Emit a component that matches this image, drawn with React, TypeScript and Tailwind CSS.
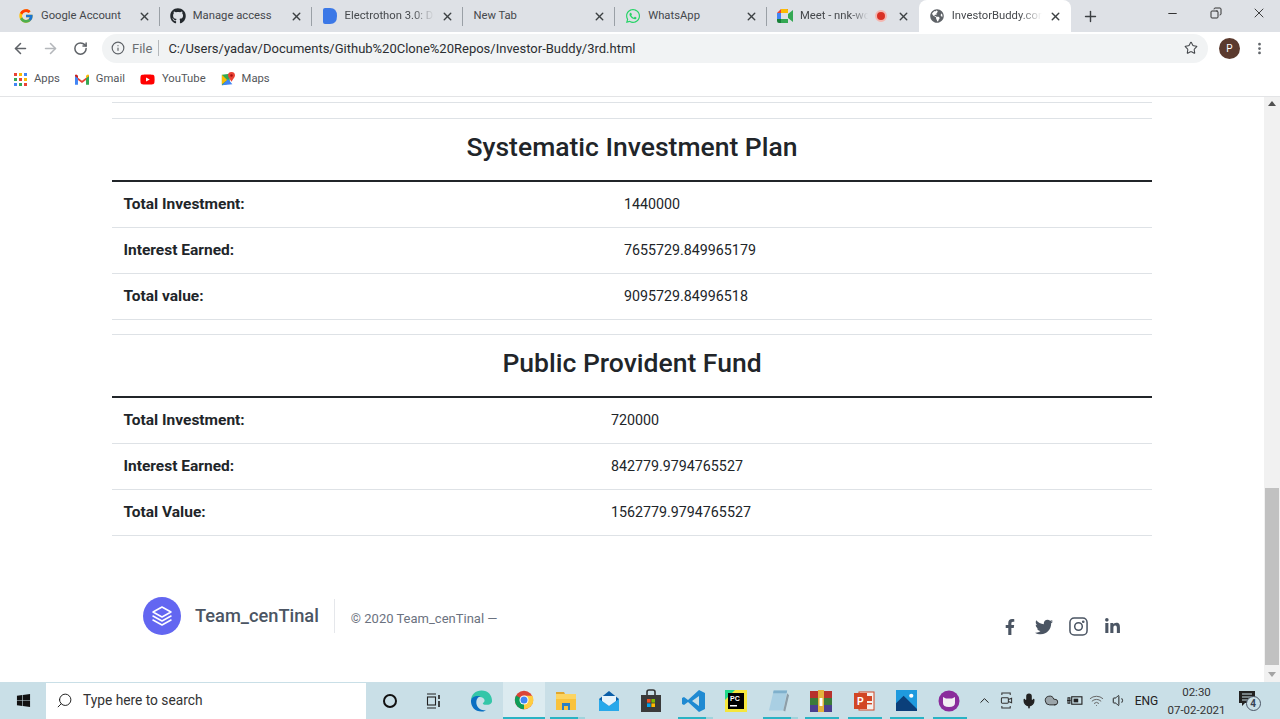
import { ArrowLeft, ArrowRight, ChevronUp, Info, Mic, Minus, MoreVertical, Plus, RotateCw, Search, Star, Volume1, Wifi, X, Cloud, Copy } from 'lucide-react';
import { FaFacebookF, FaGithub, FaGlobeAmericas, FaLinkedinIn, FaTwitter, FaWhatsapp, FaWindows, FaYoutube } from 'react-icons/fa';
import { FcGoogle } from 'react-icons/fc';
import type { ReactNode } from 'react';

const sans = 'font-["Roboto","Noto_Sans",sans-serif]';

function MeetIcon() {
  return (
    <svg viewBox="0 0 16 14" className="w-4 h-[14px]">
      <path d="M0 4 L4 0 H11 V4 H4 V10 H0 Z" fill="#ea4335" />
      <path d="M0 4 H4 V10 H0 Z" fill="#4285f4" />
      <path d="M0 10 H4 V14 H2 Q0 14 0 12 Z" fill="#188038" />
      <path d="M4 10 H11 V14 H4 Z" fill="#34a853" />
      <path d="M4 0 H10 Q11 0 11 1 V4 H4 Z" fill="#fbbc04" />
      <path d="M11 5 L16 1 V13 L11 9 Z" fill="#34a853" />
    </svg>
  );
}

function DocsTabIcon() {
  return (
    <svg viewBox="0 0 14 16" className="w-[14px] h-4">
      <path d="M0 2 Q0 0 2 0 H7 Q14 0 14 8 Q14 16 7 16 H2 Q0 16 0 14 Z" fill="#3b78e7" />
    </svg>
  );
}

function GmailIcon() {
  return (
    <svg viewBox="0 0 16 12" className="w-[14px] h-[11px]">
      <path d="M0 1.5 L8 7.5 L16 1.5 V4 L8 10 L0 4 Z" fill="#ea4335" />
      <path d="M0 2 V12 H3.4 V4.5 Z" fill="#4285f4" />
      <path d="M16 2 V12 H12.6 V4.5 Z" fill="#34a853" />
      <path d="M12.6 4.5 L16 2 V0.8 Q15 0 14 0.6 L12.6 1.7 Z" fill="#fbbc04" />
      <path d="M0 2 V0.8 Q1 0 2 0.6 L3.4 1.7 V4.5 Z" fill="#c5221f" />
    </svg>
  );
}

function MapsIcon() {
  return (
    <svg viewBox="0 0 16 16" className="w-[14px] h-[14px]">
      <path d="M1 3 L10 2 V13 L1 15 Z" fill="#34a853" />
      <path d="M1 15 L8 8 L13 14 Z" fill="#4285f4" />
      <path d="M1 3 L7 9 L1 14 Z" fill="#fbbc04" />
      <path d="M12 0 C9 0 8 2 8 4 C8 6 11 9 12 11 C13 9 16 6 16 4 C16 2 15 0 12 0 Z" fill="#ea4335" />
      <circle cx="12" cy="4" r="1.4" fill="#a50e0e" />
    </svg>
  );
}

function AppsIcon() {
  const colors = ['#ea4335', '#fbbc04', '#4285f4', '#34a853', '#ea4335', '#fbbc04', '#4285f4', '#34a853', '#ea4335'];
  return (
    <div className="grid grid-cols-3 gap-[2px]">
      {colors.map((c, i) => (
        <svg key={i} viewBox="0 0 3 3" className="w-[3px] h-[3px]">
          <rect width="3" height="3" fill={c} />
        </svg>
      ))}
    </div>
  );
}

function InstagramIcon() {
  return (
    <svg viewBox="0 0 20 20" className="w-[19px] h-[19px]" fill="none" stroke="#4b5563" strokeWidth="1.6">
      <rect x="1" y="1" width="18" height="18" rx="4.5" />
      <circle cx="10" cy="10" r="4" />
      <circle cx="15" cy="5" r="0.6" fill="#4b5563" />
    </svg>
  );
}

function ChromeIcon() {
  return (
    <svg viewBox="0 0 24 24" className="w-5 h-[22px]">
      <circle cx="12" cy="12" r="11" fill="#db4437" />
      <path d="M12 12 L2.5 6.5 A11 11 0 0 0 12 23 Z" fill="#0f9d58" />
      <path d="M12 7 H22 A11 11 0 0 1 12 23 Z" fill="#ffcd40" />
      <circle cx="12" cy="12" r="5.4" fill="#fff" />
      <circle cx="12" cy="12" r="4.2" fill="#4285f4" />
    </svg>
  );
}

function EdgeIcon() {
  return (
    <svg viewBox="0 0 24 24" className="w-[23px] h-[24px]">
      <path d="M1 12 C1 5 6 1 12 1 C19 1 23 6 23 12 C23 15 20 16 17 16 C14 16 13 15 13.5 14 C16 13 16 9 12 8 C6 7 1 9 1 12 Z" fill="#34c6a8" />
      <path d="M1 12 C1 8 6 6 11 7 C7 8 6 12 7 16 C8 20 13 23 17 21 C15 23 13 23 12 23 C5 23 1 18 1 12 Z" fill="#0a6fc2" />
    </svg>
  );
}

function FolderIcon() {
  return (
    <svg viewBox="0 0 22 20" className="w-[22px] h-5">
      <path d="M1 1 H9 L10 3 H1 Z" fill="#e2a72e" />
      <path d="M1 3 H21 V19 H1 Z" fill="#fcd462" />
      <path d="M1 8 H21 V19 H1 Z" fill="#f9c23c" />
      <path d="M7 12 H15 V19 H13 V15 H9 V19 H7 Z" fill="#2a7fc4" />
    </svg>
  );
}

function MailIcon() {
  return (
    <svg viewBox="0 0 22 22" className="w-[22px] h-[22px]">
      <path d="M1 9 L11 1 L21 9 V21 H1 Z" fill="#0a5ea8" />
      <path d="M1 9 L11 16 L21 9 V21 H1 Z" fill="#28a8ea" />
      <path d="M4 6 H18 V11 L11 16 L4 11 Z" fill="#e8f4fb" />
    </svg>
  );
}

function StoreIcon() {
  return (
    <svg viewBox="0 0 22 24" className="w-[22px] h-6">
      <path d="M7 6 V3 Q7 1 9 1 H13 Q15 1 15 3 V6" fill="none" stroke="#333" strokeWidth="1.6" />
      <rect x="1" y="6" width="20" height="17" fill="#3a3a3a" />
      <rect x="7" y="10" width="3.6" height="3.6" fill="#f25022" />
      <rect x="11.4" y="10" width="3.6" height="3.6" fill="#7fba00" />
      <rect x="7" y="14.4" width="3.6" height="3.6" fill="#00a4ef" />
      <rect x="11.4" y="14.4" width="3.6" height="3.6" fill="#ffb900" />
    </svg>
  );
}

function VsCodeIcon() {
  return (
    <svg viewBox="0 0 24 24" className="w-6 h-6">
      <path d="M17 1 L23 4 V20 L17 23 L6 13 L2 16 L0 15 V9 L2 8 L6 11 Z M17 7 L10 12 L17 17 Z" fill="#1f8ad2" />
    </svg>
  );
}

function PyCharmIcon() {
  return (
    <svg viewBox="0 0 22 22" className="w-[22px] h-[22px]">
      <rect width="22" height="22" fill="#f5e63c" />
      <path d="M0 0 H10 L0 10 Z" fill="#21d789" />
      <rect x="3" y="3" width="16" height="16" fill="#000" />
      <rect x="5" y="15" width="7" height="1.5" fill="#fff" />
      <text x="5" y="11" fontSize="7" fontWeight="700" fill="#fff" fontFamily="Liberation Sans, sans-serif">PC</text>
    </svg>
  );
}

function NotepadIcon() {
  return (
    <svg viewBox="0 0 24 24" className="w-[23px] h-6">
      <path d="M7 1 H21 L17 22 H2 Z" fill="#a9cfe3" />
      <path d="M7 1 H21 L20.5 4 H6.3 Z" fill="#7fb0cc" />
      <path d="M17 22 L21 4 L23 6 L19 23 Z" fill="#8d9ea8" />
    </svg>
  );
}

function WinRarIcon() {
  return (
    <svg viewBox="0 0 24 24" className="w-6 h-6">
      <rect x="1" y="2" width="22" height="7" fill="#b7312c" />
      <rect x="1" y="9" width="22" height="7" fill="#3b7a3a" />
      <rect x="1" y="16" width="22" height="7" fill="#4a3f8f" />
      <rect x="9" y="1" width="6" height="22" fill="#e3b23c" />
      <rect x="10.5" y="9" width="3" height="8" fill="#fff" />
    </svg>
  );
}

function PowerPointIcon() {
  return (
    <svg viewBox="0 0 22 22" className="w-[22px] h-[22px]">
      <rect x="6" y="2" width="15" height="18" fill="#f4f1ee" stroke="#d24625" />
      <rect x="14" y="6" width="5" height="5" fill="#d24625" />
      <rect x="14" y="13" width="5" height="1.4" fill="#d24625" />
      <rect x="1" y="3" width="13" height="16" fill="#d24625" />
      <text x="4" y="15" fontSize="10" fontWeight="700" fill="#fff" fontFamily="Liberation Sans, sans-serif">P</text>
    </svg>
  );
}

function PhotosIcon() {
  return (
    <svg viewBox="0 0 22 22" className="w-[21px] h-[21px]">
      <rect width="22" height="22" fill="#1f9ade" />
      <circle cx="16" cy="6" r="2.2" fill="#fff" />
      <path d="M0 22 V14 L8 6 L22 20 V22 Z" fill="#0b3f7a" />
    </svg>
  );
}

function CatAppIcon() {
  return (
    <svg viewBox="0 0 22 22" className="w-[22px] h-[22px]">
      <circle cx="11" cy="11" r="10.5" fill="#8a2c9c" />
      <path d="M5 7 L8 8.5 H14 L17 7 V13 Q17 17 11 17 Q5 17 5 13 Z" fill="#f2eef3" />
    </svg>
  );
}

function MeetNowIcon() {
  return (
    <svg viewBox="0 0 14 18" className="w-[13px] h-[17px]" fill="none" stroke="#333" strokeWidth="1.1">
      <path d="M2 3 V1 H11 V3 M2 15 V17 H11 V15" />
      <rect x="1.5" y="6" width="7.5" height="6" rx="1" />
      <path d="M9 8 L12.5 6.5 V11.5 L9 10" />
    </svg>
  );
}

function PowerIcon() {
  return (
    <svg viewBox="0 0 18 14" className="w-[17px] h-[13px]" fill="none" stroke="#222" strokeWidth="1.2">
      <rect x="6" y="3" width="11" height="8" />
      <rect x="8" y="5" width="5" height="4" fill="#222" stroke="none" />
      <path d="M1 7 H5 M2 4 V10 H4 V4 Z" />
    </svg>
  );
}

function NotificationIcon() {
  return (
    <div className="relative w-[22px] h-[20px]">
      <svg viewBox="0 0 16 16" className="w-4 h-4">
        <path d="M0 0 H16 V12 H6 L3 15 V12 H0 Z" fill="#222" />
        <path d="M3 3 H13 M3 6 H13 M3 9 H10" stroke="#c9dfe7" strokeWidth="1" />
      </svg>
      <span className="absolute top-[5px] left-[7px] w-[15px] h-[15px] rounded-full border border-gray-600 bg-[#c9dfe7] text-[10px] font-bold leading-[13px] text-center text-gray-700">4</span>
    </div>
  );
}

type TabInfo = { icon: ReactNode; title: string; record?: boolean; active?: boolean; fade?: boolean };

const tabs: TabInfo[] = [
  { icon: <FcGoogle size={16} />, title: 'Google Account' },
  { icon: <FaGithub size={16} color="#24292e" />, title: 'Manage access' },
  { icon: <DocsTabIcon />, title: 'Electrothon 3.0: Da', fade: true },
  { icon: null, title: 'New Tab' },
  { icon: <FaWhatsapp size={16} color="#25d366" />, title: 'WhatsApp' },
  { icon: <MeetIcon />, title: 'Meet - nnk-wc', record: true, fade: true },
  { icon: <FaGlobeAmericas size={14} color="#5f6368" />, title: 'InvestorBuddy.com', active: true, fade: true },
];

function Tab({ tab, last }: { tab: TabInfo; last: boolean }) {
  return (
    <div className={`relative flex items-center w-[151.8px] h-8 pl-[10px] pr-[9px] gap-[7px] ${tab.active ? 'bg-white rounded-t-lg' : ''}`}>
      {tab.icon && <span className="shrink-0 flex w-4 justify-center">{tab.icon}</span>}
      <span className={`flex-1 overflow-hidden whitespace-nowrap text-[11.25px] text-[#45484c] ${tab.fade ? '[mask-image:linear-gradient(to_right,black_75%,transparent)]' : ''}`}>{tab.title}</span>
      {tab.record && <span className="shrink-0 w-3 h-3 rounded-full bg-[#d93025] border-2 border-[#f4b6b0] mr-[3px]" />}
      <X size={13} strokeWidth={2.6} color="#3c4043" className="shrink-0" />
      {!tab.active && !last && <span className="absolute right-0 top-[7px] h-[19px] w-px bg-[#9aa0a6]" />}
    </div>
  );
}

function TabStrip() {
  return (
    <div className="flex items-center h-8 bg-[#dee1e6] pl-2">
      {tabs.map((t, i) => (
        <Tab key={t.title} tab={t} last={i === 5} />
      ))}
      <Plus size={17} strokeWidth={2} color="#3c4043" className="ml-[11px]" />
      <div className="ml-auto flex items-center text-[#333] mb-[6px]">
        <span className="w-[43px] flex justify-center"><Minus size={13} /></span>
        <span className="w-[43px] flex justify-center"><Copy size={12} className="-scale-x-100" /></span>
        <span className="w-[43px] flex justify-center"><X size={16} strokeWidth={1.4} /></span>
      </div>
    </div>
  );
}

function Toolbar() {
  return (
    <div className="flex items-center h-8 bg-white pl-3 pr-[13px]">
      <ArrowLeft size={17} color="#5f6368" strokeWidth={2.2} />
      <ArrowRight size={17} color="#b4b7bb" strokeWidth={2.2} className="ml-[13px]" />
      <RotateCw size={15} color="#5f6368" strokeWidth={2.4} className="ml-[14px]" />
      <div className="ml-[14px] flex items-center flex-1 h-[29px] rounded-full bg-[#f1f3f4] pl-[9px] pr-[10px]">
        <Info size={14} color="#5f6368" strokeWidth={2} />
        <span className="ml-[7px] pt-px text-[13px] text-[#6b6f73]">File</span>
        <span className="ml-[6px] w-px h-[16px] bg-[#b5b8bb]" />
        <span className="ml-[9px] pt-px text-[13px] text-[#2b2e31] whitespace-nowrap">C:/Users/yadav/Documents/Github%20Clone%20Repos/Investor-Buddy/3rd.html</span>
        <Star size={14} color="#45484c" strokeWidth={1.8} className="ml-auto" />
      </div>
      <span className="ml-[11px] w-[21px] h-[21px] rounded-full bg-[#5b3a2e] text-white text-[10px] flex items-center justify-center">P</span>
      <MoreVertical size={15} color="#5f6368" strokeWidth={2.4} className="ml-3" />
    </div>
  );
}

function Bookmarks() {
  const items = [
    { icon: <AppsIcon />, label: 'Apps' },
    { icon: <GmailIcon />, label: 'Gmail' },
    { icon: <FaYoutube size={15} color="#f00" />, label: 'YouTube' },
    { icon: <MapsIcon />, label: 'Maps' },
  ];
  return (
    <div className="flex items-center h-[33px] bg-white border-b border-[#e3e4e6] pl-[14px] pb-[2px] gap-[15px]">
      {items.map((b) => (
        <div key={b.label} className="flex items-center gap-[7px]">
          {b.icon}
          <span className="text-[11.25px] text-[#54575b]">{b.label}</span>
        </div>
      ))}
    </div>
  );
}

type Row = { label: string; value: string };

function PlanSection({ title, rows, labelWidth }: { title: string; rows: Row[]; labelWidth: string }) {
  return (
    <section className="border-t border-[#dee2e6]">
      <h3 className="h-[56px] pb-[5px] flex items-center justify-center text-[26.5px] font-medium text-[#212529] border-b-2 border-[#212529] box-content">{title}</h3>
      {rows.map((r) => (
        <div key={r.label} className={`grid ${labelWidth} items-center h-[46px] border-b border-[#dee2e6] text-[14.25px] text-[#212529]`}>
          <span className="font-bold text-[15.5px] pl-[11.5px]">{r.label}</span>
          <span className="pl-3">{r.value}</span>
        </div>
      ))}
    </section>
  );
}

function Footer() {
  return (
    <footer className="flex justify-between items-start pl-[143px] pr-[142px] h-[146px] text-[#4b5563]">
      <div className="flex items-center mt-[61px]">
        <span className="w-[38px] h-[38px] rounded-full bg-[#6366f1] flex items-center justify-center">
          <svg viewBox="0 0 24 24" className="w-6 h-6" fill="none" stroke="#fff" strokeWidth="1.5" strokeLinejoin="round" strokeLinecap="round">
            <path d="M12 3 L21 8 L12 13 L3 8 Z" />
            <path d="M3 12 L12 17 L21 12" />
            <path d="M3 16 L12 21 L21 16" />
          </svg>
        </span>
        <span className="ml-[14px] text-[18.25px] font-medium text-[#4b5563]">Team_cenTinal</span>
        <span className="ml-[15px] w-px h-[34px] bg-[#e5e7eb]" />
        <span className="ml-[16px] mt-[6px] text-[13px] text-[#6b7280]">© 2020 Team_cenTinal —</span>
      </div>
      <div className="flex items-center gap-[14px] mt-[81px]">
        <span className="w-5 flex justify-center"><FaFacebookF size={16} color="#4b5563" /></span>
        <span className="w-5 flex justify-center"><FaTwitter size={18} color="#4b5563" /></span>
        <span className="w-5 flex justify-center"><InstagramIcon /></span>
        <span className="w-5 flex justify-center"><FaLinkedinIn size={17} color="#4b5563" /></span>
      </div>
    </footer>
  );
}

function Scrollbar() {
  return (
    <div className="relative w-4 bg-[#f1f1f1] shrink-0">
      <span className="absolute top-[4px] left-[4px] w-0 h-0 border-x-4 border-x-transparent border-b-[5px] border-b-[#505050]" />
      <div className="absolute top-[391px] left-[1px] w-[14px] h-[177px] bg-[#c1c1c1]" />
      <span className="absolute bottom-[5px] left-[4px] w-0 h-0 border-x-4 border-x-transparent border-t-[5px] border-t-[#a3a3a3]" />
    </div>
  );
}

type TaskItem = { icon: ReactNode; bar?: boolean; stacked?: boolean; active?: boolean };

const taskItems: TaskItem[] = [
  { icon: <EdgeIcon /> },
  { icon: <ChromeIcon />, active: true },
  { icon: <FolderIcon />, bar: true, stacked: true },
  { icon: <MailIcon /> },
  { icon: <StoreIcon /> },
  { icon: <VsCodeIcon />, bar: true, stacked: true },
  { icon: <PyCharmIcon /> },
  { icon: <NotepadIcon />, bar: true, stacked: true },
  { icon: <WinRarIcon />, bar: true },
  { icon: <PowerPointIcon />, bar: true },
  { icon: <PhotosIcon />, bar: true },
  { icon: <CatAppIcon />, bar: true },
];

function Taskbar() {
  return (
    <div className="flex items-center h-[37px] bg-[#c9dfe7] text-[#222]">
      <span className="w-[46px] flex justify-center"><FaWindows size={15} color="#111" /></span>
      <div className="flex items-center w-[320px] h-[36px] bg-white pl-[10px]">
        <Search size={17} strokeWidth={1.4} className="-scale-x-100" />
        <span className="ml-[10px] text-[13.75px] text-[#333]">Type here to search</span>
      </div>
      <span className="w-[47px] flex justify-center">
        <span className="w-[14px] h-[14px] rounded-full border-2 border-[#111]" />
      </span>
      <span className="w-[42px] flex justify-center">
        <svg viewBox="0 0 16 16" className="w-4 h-4" fill="none" stroke="#222" strokeWidth="1.1">
          <path d="M1 1 H10 M1 15 H10" />
          <rect x="1.5" y="4" width="8" height="8" />
          <path d="M13 2 V6 M13 8 V14" strokeWidth="1.6" />
        </svg>
      </span>
      <div className="flex h-full ml-[5px]">
        {taskItems.map((t, i) => (
          <div key={i} className={`relative flex items-center justify-center w-[42.5px] h-full ${t.active ? 'bg-[#dcebf0] border-b-2 border-[#2ab3c4]' : ''}`}>
            {t.icon}
            {t.bar && <span className={`absolute bottom-0 left-[5px] h-[2px] ${t.stacked ? 'w-[28px] shadow-[7px_0_0_#9fd3dc]' : 'w-[34px]'} bg-[#2ab3c4]`} />}
          </div>
        ))}
      </div>
      <div className="flex items-center ml-[3px]">
        <span className="w-[22.5px] flex justify-center"><ChevronUp size={15} strokeWidth={1.6} /></span>
        <span className="w-[22.5px] flex justify-center"><MeetNowIcon /></span>
        <span className="w-[22.5px] flex justify-center"><Mic size={16} strokeWidth={2.4} fill="#222" /></span>
        <span className="w-[22.5px] flex justify-center"><Cloud size={15} strokeWidth={1.4} fill="#9ba5aa" /></span>
        <span className="w-[22.5px] flex justify-center"><PowerIcon /></span>
        <span className="w-[22.5px] flex justify-center"><Wifi size={15} strokeWidth={1.6} color="#666" /></span>
        <span className="w-[22.5px] flex justify-center"><Volume1 size={15} strokeWidth={1.6} /></span>
        <span className="w-[32px] text-center text-[12px]">ENG</span>
      </div>
      <div className="w-[68px] flex flex-col items-center text-[11.5px] leading-[18px] text-[#333]">
        <span>02:30</span>
        <span>07-02-2021</span>
      </div>
      <span className="w-[38px] flex justify-center"><NotificationIcon /></span>
    </div>
  );
}

export default function App() {
  const sip: Row[] = [
    { label: 'Total Investment:', value: '1440000' },
    { label: 'Interest Earned:', value: '7655729.849965179' },
    { label: 'Total value:', value: '9095729.84996518' },
  ];
  const ppf: Row[] = [
    { label: 'Total Investment:', value: '720000' },
    { label: 'Interest Earned:', value: '842779.9794765527' },
    { label: 'Total Value:', value: '1562779.9794765527' },
  ];
  return (
    <div className={`w-[1280px] h-[719px] overflow-hidden flex flex-col bg-white ${sans}`}>
      <TabStrip />
      <Toolbar />
      <Bookmarks />
      <div className="flex h-[585px]">
        <main className="flex-1 min-w-0">
          <div className="mx-[112px] pt-[5px] flex flex-col gap-[14px]">
            <div className="border-t border-[#dee2e6] mb-px" />
            <PlanSection title="Systematic Investment Plan" rows={sip} labelWidth="grid-cols-[500px_1fr]" />
            <PlanSection title="Public Provident Fund" rows={ppf} labelWidth="grid-cols-[487px_1fr]" />
          </div>
          <Footer />
        </main>
        <Scrollbar />
      </div>
      <Taskbar />
    </div>
  );
}
